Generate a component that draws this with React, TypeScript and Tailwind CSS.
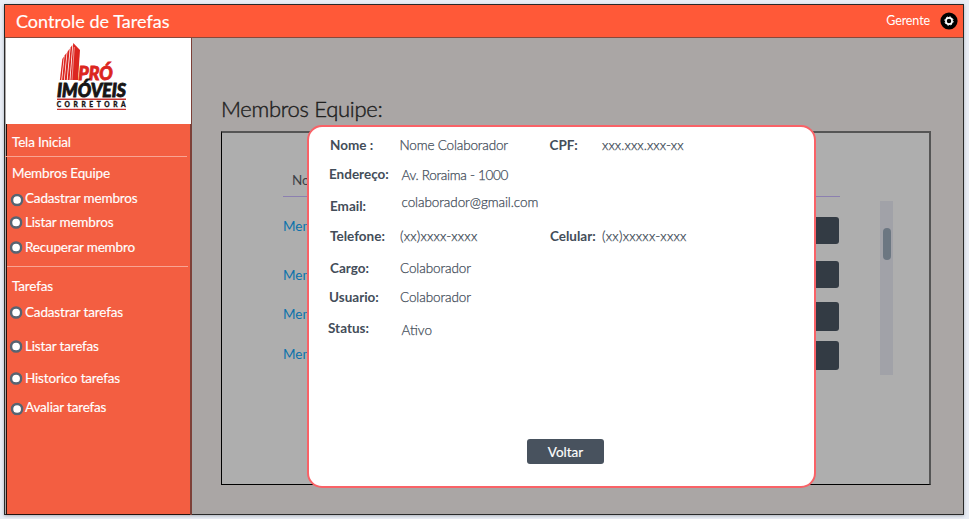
import React from 'react';

function Radio({ className = '' }: { className?: string }) {
  return (
    <svg width="13" height="13" viewBox="0 0 13 13" className={`block shrink-0 translate-x-[0.6px] ${className}`}>
      <circle cx="6.5" cy="6.5" r="5.1" fill="#fff" stroke="#566472" strokeWidth="2.5" />
    </svg>
  );
}

function MenuItem({ label, margin, radio = 'ml-[2px] mr-[3px]' }: { label: string; margin: string; radio?: string }) {
  return (
    <div className={`flex h-5 items-center ${margin}`}>
      <Radio className={radio} />
      <span className="whitespace-nowrap">{label}</span>
    </div>
  );
}

function Logo() {
  return (
    <svg width="84" height="80" viewBox="50 38 84 80" className="ml-11 block">
      <g fill="#dc2620">
        <path d="M73.2 43 80 50 78 80H70.4Z" />
        <path d="M70.6 47.5 72.3 45 69.6 80h-2Z" />
        <path d="M67.4 52 69.7 48.5 66.8 80h-2.1Z" />
        <path d="M64.6 55.5 66.6 52.7 64 80h-1.9Z" />
        <path d="M62.3 59 63.9 56.5 61.3 80h-1.4Z" />
      </g>
      <path d="M74.3 47 72 80" stroke="#fff" strokeWidth=".5" />
      <text x="78.3" y="79.6" textLength="34.5" lengthAdjust="spacingAndGlyphs" fontSize="19" stroke="#dc2620" strokeWidth=".8" className="fill-[#dc2620] font-['Lato',sans-serif] font-black italic">PRÓ</text>
      <text x="57" y="96.5" textLength="69" lengthAdjust="spacingAndGlyphs" fontSize="18.5" stroke="#171515" strokeWidth=".9" className="fill-[#171515] font-['Lato',sans-serif] font-black italic">IMÓVEIS</text>
      <path d="M57 99.2h69M57 109.4h69" stroke="#c8332f" strokeWidth="1.4" />
      <text x="56.7" y="107" textLength="69" fontSize="6.6" stroke="#171515" strokeWidth=".3" className="fill-[#171515] font-['Lato',sans-serif] font-black">CORRETORA</text>
    </svg>
  );
}

function Gear() {
  return (
    <svg width="18" height="18" viewBox="0 0 18 18" className="block">
      <circle cx="9" cy="9" r="8.6" fill="#000" />
      <circle cx="9" cy="9" r="4.2" fill="none" stroke="#fff" strokeWidth="1" strokeDasharray="1.65 1.649" />
      <circle cx="9" cy="9" r="3.1" fill="none" stroke="#fff" strokeWidth="1.7" />
    </svg>
  );
}

function Sidebar() {
  return (
    <aside className="-mb-px ml-px flex w-[186px] shrink-0 flex-col border-r-2 border-[#7d4038]">
      <div className="h-[86px] w-[185px] shrink-0 bg-white"><Logo /></div>
      <nav className="flex flex-1 flex-col border-b border-l border-[#25120e] bg-[#f35e41] text-[13.5px] leading-5 tracking-[-0.17px] text-white [-webkit-text-stroke:0.15px_white]">
        <span className="ml-[5px] mt-2">Tela Inicial</span>
        <div className="-ml-0.5 mt-1 h-px w-[182px] bg-[#f9a492]" />
        <span className="ml-[5px] mt-[6px]">Membros Equipe</span>
        <MenuItem label="Cadastrar membros" margin="mt-[5px]" radio="ml-[3px] mr-[2px] translate-y-[1.5px]" />
        <MenuItem label="Listar membros" margin="mt-1" />
        <MenuItem label="Recuperar membro" margin="mt-[5px]" />
        <div className="mt-[9px] h-px w-[181px] bg-[#f9a492]" />
        <span className="ml-[5px] mt-[9px]">Tarefas</span>
        <MenuItem label="Cadastrar tarefas" margin="mt-[6px]" />
        <MenuItem label="Listar tarefas" margin="mt-[14px]" />
        <MenuItem label="Historico tarefas" margin="mt-3" />
        <MenuItem label="Avaliar tarefas" margin="mt-[9px]" radio="ml-[3px] mr-[2px] translate-y-[1.5px]" />
      </nav>
    </aside>
  );
}

function TableRow({ row, text }: { row: string; text: string }) {
  return (
    <div className={`flex justify-between pr-px ${row}`}>
      <span className={`h-5 leading-5 text-[#0b72ab] ${text}`}>Mem</span>
      <span className="h-full w-20 rounded-[3px] bg-[#333b44]" />
    </div>
  );
}

function TeamPanel() {
  return (
    <section className="flex h-[354px] w-[710px] border border-black border-r-2 border-r-[#555] border-t-2 border-t-[#555] bg-[#aeaeae] text-[13.5px]">
      <div className="ml-[61px] w-[557px]">
        <div className="mt-[37px] pl-[9px] leading-5 text-[#3c4146]">No</div>
        <div className="mt-[6px] h-px bg-[#8c80b0]" />
        <TableRow row="mt-[20px] h-[27px]" text="-mt-px" />
        <TableRow row="mt-[17px] h-[27px]" text="mt-1" />
        <TableRow row="mt-[14px] h-[29px]" text="mt-[2px]" />
        <TableRow row="mt-[10px] h-[29px]" text="mt-[3px]" />
      </div>
      <div className="ml-10 mt-[68px] h-[174px] w-[13px] bg-[#a1a2a8] px-[3px] pt-[27px]">
        <div className="h-8 w-2 rounded-full bg-[#6c7782]" />
      </div>
    </section>
  );
}

function Field({ label, value, row, labelClass = '', valueClass = 'tracking-[-0.1px]', children }: { label: string; value: string; row: string; labelClass?: string; valueClass?: string; children?: React.ReactNode }) {
  return (
    <div className={`flex h-5 whitespace-nowrap ${row}`}>
      <span className={`w-[70px] shrink-0 font-bold ${labelClass}`}>{label}</span>
      <span className={`w-[150px] shrink-0 font-light [-webkit-text-stroke:0.25px_#434d59] ${valueClass}`}>{value}</span>
      {children}
    </div>
  );
}

function MemberDialog() {
  return (
    <div role="dialog" className="absolute left-[307px] top-[125px] flex h-[363px] w-[509px] flex-col rounded-[15px] border-2 border-[#f96267] bg-white pl-[21px] text-[13.5px] leading-5 text-[#434d59]">
      <Field label="Nome :" value="Nome Colaborador" row="mt-2" valueClass="-ml-[0.5px] mr-[0.5px] tracking-[-0.16px]">
        <span className="-ml-[0.5px] w-[52.5px] font-bold">CPF:</span>
        <span className="font-light tracking-[0.08px] [-webkit-text-stroke:0.25px_#434d59]">xxx.xxx.xxx-xx</span>
      </Field>
      <Field label="Endereço:" value="Av. Roraima - 1000" row="mt-[9px]" labelClass="-ml-px mr-px" valueClass="pl-[1.5px] pt-px tracking-[-0.3px]" />
      <Field label="Email:" value="colaborador@gmail.com" row="mt-3" valueClass="-mt-[4px] pl-[1.5px] tracking-[-0.08px]" />
      <Field label="Telefone:" value="(xx)xxxx-xxxx" row="mt-[10px]" valueClass="tracking-[0.2px]">
        <span className="w-[52px] font-bold">Celular:</span>
        <span className="font-light tracking-[0.25px] [-webkit-text-stroke:0.25px_#434d59]">(xx)xxxxx-xxxx</span>
      </Field>
      <Field label="Cargo:" value="Colaborador" row="mt-3" />
      <Field label="Usuario:" value="Colaborador" row="mt-[9px]" labelClass="-ml-px mr-px" />
      <Field label="Status:" value="Ativo" row="mt-[11px]" labelClass="-ml-[2px] mr-[2px]" valueClass="pl-[1.5px] pt-[2px]" />
      <button className="ml-[197px] mt-[101px] h-[25px] w-[77px] rounded-[3px] bg-[#48525e] text-center text-white [-webkit-text-stroke:0.15px_white]">Voltar</button>
    </div>
  );
}

export default function App() {
  return (
    <div className="relative h-[519px] w-[969px] overflow-hidden bg-[#e9edf5] pl-1 pt-1 font-['Lato',sans-serif]">
      <div className="flex h-[511px] w-[960px] flex-col border border-[#292929] bg-[#aaa6a5] shadow-[0_1px_3px_#aab0ba]">
        <header className="flex h-[33px] shrink-0 items-center justify-between border-b border-[#87493c] bg-[#ff5938] pl-[11px] pr-[5px] text-white">
          <h1 className="text-[18px] tracking-[0.03px] [-webkit-text-stroke:0.15px_white]">Controle de Tarefas</h1>
          <div className="flex items-center gap-[10px] text-[12.5px] tracking-[-0.1px]"><span>Gerente</span><Gear /></div>
        </header>
        <div className="flex flex-1">
          <Sidebar />
          <main className="ml-[29px] pt-[55px]">
            <h2 className="mb-[6px] h-8 text-[22px] font-light leading-8 tracking-[-0.3px] text-[#202020] [-webkit-text-stroke:0.4px_#202020]">Membros Equipe:</h2>
            <TeamPanel />
          </main>
        </div>
      </div>
      <MemberDialog />
    </div>
  );
}
